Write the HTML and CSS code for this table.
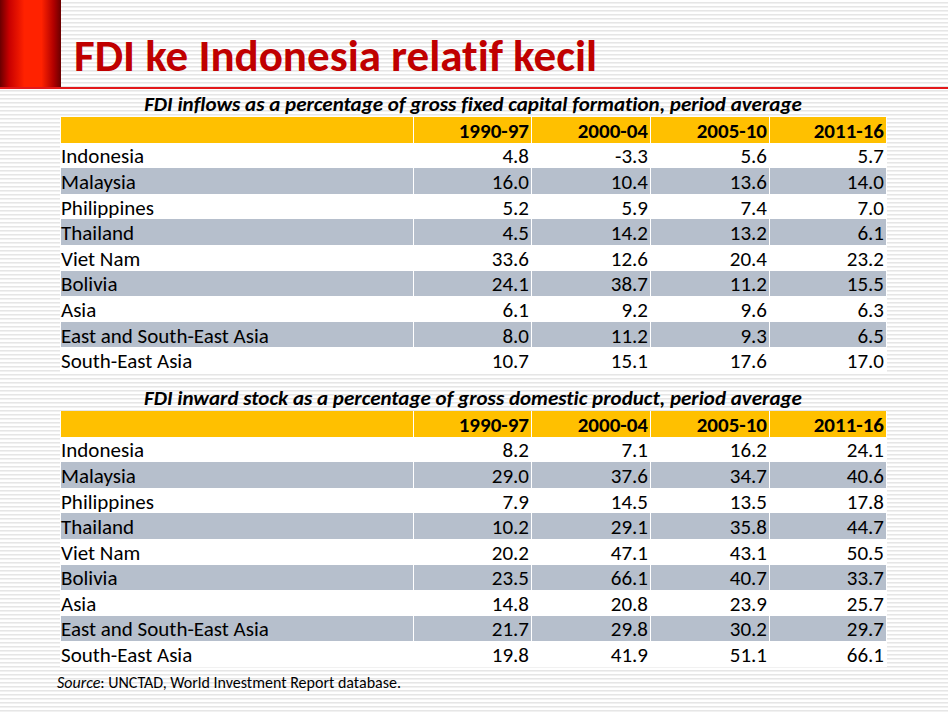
FILE: index.html
```html
<!DOCTYPE html>
<html>
<head>
<meta charset="utf-8">
<link rel="stylesheet" href="styles.css">
</head>
<body>
<div class="slide">
  <header class="head">
    <div class="accent"></div>
    <h1 class="title">FDI ke Indonesia relatif kecil</h1>
  </header>
  <div class="rule"></div>
  <main class="content">
    <h2 class="caption">FDI inflows as a percentage of gross fixed capital formation, period average</h2>
    <table class="data">
      <colgroup><col class="c-label"><col class="c1"><col class="c2"><col class="c3"><col class="c4"></colgroup>
      <thead><tr><th></th><th>1990-97</th><th>2000-04</th><th>2005-10</th><th>2011-16</th></tr></thead>
      <tbody>
        <tr><td>Indonesia</td><td>4.8</td><td>-3.3</td><td>5.6</td><td>5.7</td></tr>
        <tr class="alt"><td>Malaysia</td><td>16.0</td><td>10.4</td><td>13.6</td><td>14.0</td></tr>
        <tr><td>Philippines</td><td>5.2</td><td>5.9</td><td>7.4</td><td>7.0</td></tr>
        <tr class="alt"><td>Thailand</td><td>4.5</td><td>14.2</td><td>13.2</td><td>6.1</td></tr>
        <tr><td>Viet Nam</td><td>33.6</td><td>12.6</td><td>20.4</td><td>23.2</td></tr>
        <tr class="alt"><td>Bolivia</td><td>24.1</td><td>38.7</td><td>11.2</td><td>15.5</td></tr>
        <tr><td>Asia</td><td>6.1</td><td>9.2</td><td>9.6</td><td>6.3</td></tr>
        <tr class="alt"><td>East and South-East Asia</td><td>8.0</td><td>11.2</td><td>9.3</td><td>6.5</td></tr>
        <tr><td>South-East Asia</td><td>10.7</td><td>15.1</td><td>17.6</td><td>17.0</td></tr>
      </tbody>
    </table>
    <h2 class="caption second">FDI inward stock as a percentage of gross domestic product, period average</h2>
    <table class="data">
      <colgroup><col class="c-label"><col class="c1"><col class="c2"><col class="c3"><col class="c4"></colgroup>
      <thead><tr><th></th><th>1990-97</th><th>2000-04</th><th>2005-10</th><th>2011-16</th></tr></thead>
      <tbody>
        <tr><td>Indonesia</td><td>8.2</td><td>7.1</td><td>16.2</td><td>24.1</td></tr>
        <tr class="alt"><td>Malaysia</td><td>29.0</td><td>37.6</td><td>34.7</td><td>40.6</td></tr>
        <tr><td>Philippines</td><td>7.9</td><td>14.5</td><td>13.5</td><td>17.8</td></tr>
        <tr class="alt"><td>Thailand</td><td>10.2</td><td>29.1</td><td>35.8</td><td>44.7</td></tr>
        <tr><td>Viet Nam</td><td>20.2</td><td>47.1</td><td>43.1</td><td>50.5</td></tr>
        <tr class="alt"><td>Bolivia</td><td>23.5</td><td>66.1</td><td>40.7</td><td>33.7</td></tr>
        <tr><td>Asia</td><td>14.8</td><td>20.8</td><td>23.9</td><td>25.7</td></tr>
        <tr class="alt"><td>East and South-East Asia</td><td>21.7</td><td>29.8</td><td>30.2</td><td>29.7</td></tr>
        <tr><td>South-East Asia</td><td>19.8</td><td>41.9</td><td>51.1</td><td>66.1</td></tr>
      </tbody>
    </table>
    <p class="source"><em>Source</em>: UNCTAD, World Investment Report database.</p>
  </main>
</div>
</body>
</html>
```

FILE: styles.css
```css
html, body {
  margin: 0;
  padding: 0;
}
body {
  width: 948px;
  height: 713px;
  overflow: hidden;
  font-family: "Carlito", "Lato", "Liberation Sans", sans-serif;
  font-variant-ligatures: none;
  background: repeating-linear-gradient(to bottom, #ffffff 0px, #ffffff 2px, #e6e6e6 2px, #e6e6e6 3px, #f1f1f1 3px, #f1f1f1 4px);
}
.slide {
  display: flex;
  flex-direction: column;
}
.head {
  display: flex;
  height: 87px;
}
.accent {
  width: 61px;
  height: 87px;
  background: linear-gradient(to right, #6a0000 0%, #c80000 15%, #ff2200 40%, #ff2200 68%, #b00000 88%, #6a0000 100%);
}
.title {
  margin: 0 0 0 13px;
  align-self: flex-end;
  padding-bottom: 5px;
  font-size: 45px;
  line-height: 52px;
  font-weight: 700;
  color: #c00000;
  letter-spacing: 0;
}
.rule {
  height: 2px;
  background: #e3191b;
}
.content {
  padding-left: 60px;
  width: 826px;
}
.caption {
  margin: 0;
  width: 826px;
  text-align: center;
  font-size: 21px;
  font-weight: 700;
  font-style: italic;
  line-height: 26px;
  padding-top: 2px;
  color: #000;
  white-space: nowrap;
}
.caption.second {
  padding-top: 12px;
}
.data {
  width: 826px;
  border-collapse: collapse;
  table-layout: fixed;
  font-size: 21px;
  background: #fff;
}
.c-label { width: 353px; }
.c1 { width: 118px; }
.c2 { width: 119px; }
.c3 { width: 119px; }
.c4 { width: 117px; }
.data th, .data td {
  box-sizing: border-box;
  height: 25.6px;
  padding: 2px 2px 0 0;
  border: 1px solid #fff;
  border-top: 0;
  border-bottom: 0;
  line-height: 20px;
  text-align: right;
  white-space: nowrap;
}
.data th {
  background: #ffc000;
  font-weight: 700;
}
.data td:first-child {
  text-align: left;
}
.data tr.alt td {
  background: #b6bfcc;
}
.source {
  margin: 6px 0 0 -3px;
  font-size: 16px;
  line-height: 20px;
}
```
